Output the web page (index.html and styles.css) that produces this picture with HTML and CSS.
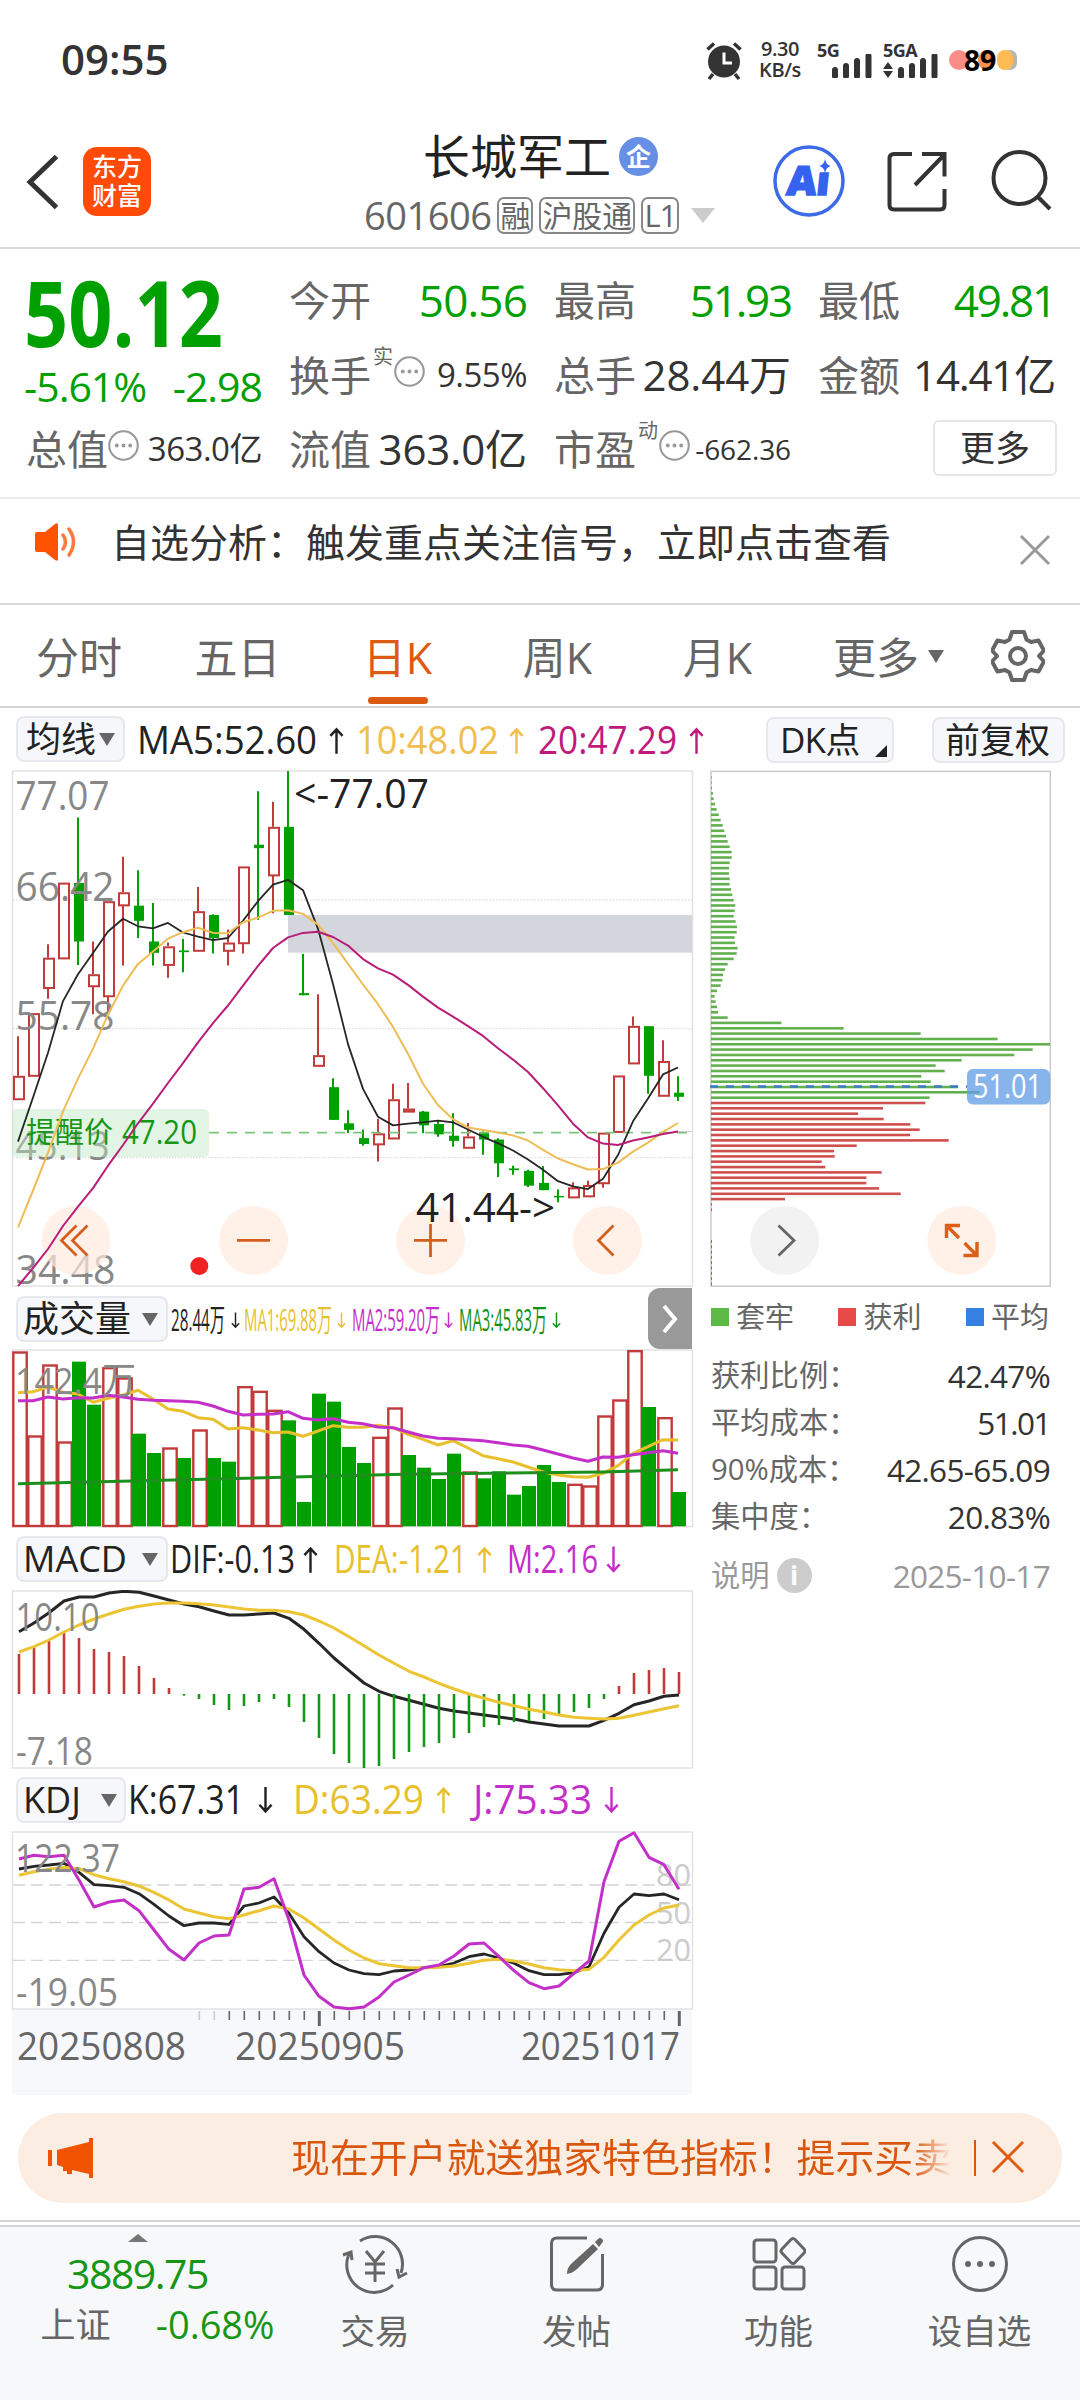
FILE: index.html
```
<!DOCTYPE html>
<html lang="zh-CN">
<head>
<meta charset="utf-8">
<title>长城军工 601606</title>
<link rel="stylesheet" href="styles.css">
</head>
<body>
<svg class="defs" width="0" height="0">
  <symbol id="up" viewBox="0 0 16 30"><path d="M8 29V3M1.500 10 8 3l6.500 7" fill="none" stroke="currentColor" stroke-width="2.600"/></symbol>
  <symbol id="down" viewBox="0 0 16 30"><path d="M8 1v26M1.500 20 8 27l6.500-7" fill="none" stroke="currentColor" stroke-width="2.600"/></symbol>
  <symbol id="dots" viewBox="0 0 30 30"><circle cx="15" cy="15" r="13.800" fill="none" stroke="#999" stroke-width="2"/><circle cx="8.500" cy="15" r="1.900" fill="#999"/><circle cx="15" cy="15" r="1.900" fill="#999"/><circle cx="21.500" cy="15" r="1.900" fill="#999"/></symbol>
</svg>

<div class="status">
  <span class="clock">09:55</span>
  <svg class="alarm" viewBox="0 0 38 40" width="38" height="40"><circle cx="19" cy="20.500" r="16" fill="#333"/><path d="M2.500 8.500 9 2.500M35.500 8.500 29 2.500M8 33l-4 5M30 33l4 5" stroke="#333" stroke-width="3.500"/><path d="M19 11.500v10.500h8" fill="none" stroke="#fff" stroke-width="3"/></svg>
  <div class="speed"><span>9.30</span><span>KB/s</span></div>
  <div class="signal"><span>5G</span><svg viewBox="0 0 55 24" width="55" height="24"><path d="M18 16v6M29 12v10M40 7v15M51.500 2v20" stroke="#333" stroke-width="6" stroke-linecap="round"/></svg></div>
  <div class="signal second"><span>5GA</span><svg viewBox="0 0 55 24" width="55" height="24"><path d="M0 15l5-7 5 7zM0 17l5 7 5-7z" fill="#333"/><path d="M18 16v6M29 12v10M40 7v15M51.500 2v20" stroke="#333" stroke-width="6" stroke-linecap="round"/></svg></div>
  <div class="battery"><i class="b1"></i><i class="b2"></i><i class="b3"></i><i class="b4"></i><b>89</b></div>
</div>

<header class="header">
  <svg class="back" viewBox="0 0 34 56" width="34" height="56"><path d="M30.500 2.500 4 28l26.500 25.500" fill="none" stroke="#333" stroke-width="5"/></svg>
  <div class="logo"><span>东方</span><span>财富</span></div>
  <div class="title">
    <div class="name">长城军工<span class="badge">企</span></div>
    <div class="code"><span class="num">601606</span><span class="tag">融</span><span class="tag">沪股通</span><span class="tag l1">L1</span><i class="tri"></i></div>
  </div>
  <svg class="ai" viewBox="0 0 72 74" width="72" height="74"><circle cx="36" cy="37" r="34" fill="none" stroke="#3d6be8" stroke-width="3.500"/><text x="18" y="51" class="ai-text" textLength="43" lengthAdjust="spacingAndGlyphs" transform="skewX(-6)">Aı</text><path d="M52 15q1 6 6 7-5 1-6 7-1-6-6-7 5-1 6-7z" fill="#3563f0"/></svg>
  <svg class="share" viewBox="0 0 60 62" width="60" height="62"><path d="M25 3H7q-4.500 0-4.500 4.500V54q0 4.500 4.500 4.500h46q4.500 0 4.500-4.500V38M35 3h22.500v22.500M57 4 28 34" fill="none" stroke="#333" stroke-width="4"/></svg>
  <svg class="search" viewBox="0 0 62 62" width="62" height="62"><circle cx="28.500" cy="29" r="26" fill="none" stroke="#333" stroke-width="4"/><path d="m47 48 12 12" stroke="#333" stroke-width="4"/></svg>
</header>

<section class="quote">
  <div class="price"><div class="last">50.12</div><div class="change"><span>-5.61%</span><span>-2.98</span></div></div>
  <div class="cell"><label>今开</label><b class="g">50.56</b></div>
  <div class="cell"><label>最高</label><b class="g one">51.93</b></div>
  <div class="cell"><label>最低</label><b class="g one">49.81</b></div>
  <div class="cell"><label>换手<sup>实</sup></label><svg class="more-dots" width="31" height="31"><use href="#dots"/></svg><b class="mid">9.55%</b></div>
  <div class="cell"><label>总手</label><b>28.44万</b></div>
  <div class="cell"><label>金额</label><b class="amount">14.41亿</b></div>
  <div class="cell"><label>总值</label><svg class="more-dots near" width="31" height="31"><use href="#dots"/></svg><b class="mid">363.0亿</b></div>
  <div class="cell"><label>流值</label><b>363.0亿</b></div>
  <div class="cell"><label>市盈<sup>动</sup></label><svg class="more-dots" width="31" height="31"><use href="#dots"/></svg><b class="small">-662.36</b></div>
  <div class="cell end"><button class="more">更多</button></div>
</section>

<section class="notice">
  <svg viewBox="0 0 46 38" width="46" height="38"><path d="M2 11q0-2 2-2h8L22 1q3-2 3 1v34q0 3-3 1l-10-8H4q-2 0-2-2z" fill="#ff5300"/><path d="M30 12q5 7 0 14M36 6q9 13 0 26" fill="none" stroke="#ff7a3a" stroke-width="3.500" stroke-linecap="round"/></svg>
  <p>自选分析：触发重点关注信号，立即点击查看</p>
  <svg class="close" viewBox="0 0 32 32" width="32" height="32"><path d="m2 2 28 28M30 2 2 30" stroke="#999" stroke-width="3"/></svg>
</section>

<nav class="tabs">
  <span>分时</span><span>五日</span><span class="on">日K</span><span>周K</span><span>月K</span><span class="drop">更多<i class="caret"></i></span>
  <svg viewBox="-27 -27 54 54" width="54" height="54"><path d="M-6-24H6L8.500-16.500 13-14 20.500-15.500 26-5.500 21 0 26 5.500 20.500 15.500 13 14 8.500 16.500 6 24H-6L-8.500 16.500-13 14-20.500 15.500-26 5.500-21 0-26-5.500-20.500-15.500-13-14-8.500-16.500z" fill="none" stroke="#666" stroke-width="4" stroke-linejoin="round"/><circle r="8" fill="none" stroke="#666" stroke-width="4"/></svg>
</nav>

<div class="ma-row">
  <button class="pill ma">均线<i class="caret"></i></button>
  <svg id="ma-values" class="values" width="590" height="54"></svg>
  <button class="pill dk">DK点<i class="corner"></i></button>
  <button class="pill fq">前复权</button>
</div>

<main class="board">
  <div class="left">
    <svg id="kline" width="694" height="520" viewBox="0 768 694 520"></svg>
    <div class="ind-row first">
      <button class="pill wide">成交量<i class="caret"></i></button>
      <svg id="vol-values" class="values" width="474" height="54"></svg>
      <div class="next"><svg viewBox="0 0 18 30" width="18" height="30"><path d="m3 2 11 13L3 28" fill="none" stroke="#fff" stroke-width="4"/></svg></div>
    </div>
    <svg id="volume" width="694" height="179" viewBox="0 1349 694 179"></svg>
    <div class="ind-row">
      <button class="pill wide">MACD<i class="caret"></i></button>
      <svg id="macd-values" class="values" width="474" height="54"></svg>
    </div>
    <svg id="macd" width="694" height="179" viewBox="0 1590 694 179"></svg>
    <div class="ind-row">
      <button class="pill kdj">KDJ<i class="caret"></i></button>
      <svg id="kdj-values" class="values" width="516" height="54"></svg>
    </div>
    <svg id="kdj" width="694" height="264" viewBox="0 1831 694 264"></svg>
  </div>
  <aside class="right">
    <svg id="chips" width="344" height="519" viewBox="709 769 344 519"></svg>
    <div class="legend"><span class="k1">套牢</span><span class="k2">获利</span><span class="k3">平均</span></div>
    <dl class="stats">
      <div><dt>获利比例：</dt><dd>42.47%</dd></div>
      <div><dt>平均成本：</dt><dd class="one">51.01</dd></div>
      <div><dt>90%成本：</dt><dd>42.65-65.09</dd></div>
      <div><dt>集中度：</dt><dd>20.83%</dd></div>
      <div class="note"><dt>说明<i>i</i></dt><dd>2025-10-17</dd></div>
    </dl>
  </aside>
</main>

<div class="promo">
  <svg viewBox="0 0 46 40" width="46" height="40"><path d="M0 12h4v16H0zM9 12 41 4V0h4v40h-4v-4l-17-4v4h-5v-3h-4v-4l-6-2z" fill="#f05400"/></svg>
  <p>现在开户就送独家特色指标！提示买卖</p>
  <i class="rule"></i>
  <svg class="x" viewBox="0 0 34 34" width="34" height="34"><path d="m2 2 30 30M32 2 2 32" stroke="#e05a10" stroke-width="3"/></svg>
</div>

<footer class="bar">
  <div class="index">
    <i class="fold"></i>
    <strong>3889.75</strong>
    <div><span>上证</span><em>-0.68%</em></div>
  </div>
  <div class="item"><svg viewBox="0 0 66 60" width="66" height="60" fill="none" stroke="#666" stroke-width="3"><path d="M18 7A27.500 27.500 0 0 1 59 39M51 51A27.500 27.500 0 0 1 7 20M1 21l8-3 1 8M65 39l-8 4-2-8"/><path d="M24 17l9 11 9-11M33 28v20M23 30h20M23 39h20"/></svg><span>交易</span></div>
  <div class="item"><svg viewBox="0 0 56 58" width="56" height="58"><path d="M38 3H8q-5.500 0-5.500 5.500v41Q2.500 55 8 55h40q5.500 0 5.500-5.500V19" fill="none" stroke="#666" stroke-width="3"/><path d="M18 39q0-6 4-10L44 9l5 5-21 20q-4 4-10 5zM46 7l3-3q2-2 4 0 2 2 0 4l-3 4z" fill="#666"/></svg><span>发帖</span></div>
  <div class="item"><svg viewBox="0 0 54 56" width="54" height="56" fill="none" stroke="#666" stroke-width="3"><rect x="2" y="4" width="22" height="22" rx="3"/><rect x="2" y="31" width="22" height="22" rx="3"/><rect x="30" y="31" width="22" height="22" rx="3"/><path d="M39 3.500q2-2 4 0l9 9.500q2 2 0 4l-9 9.500q-2 2-4 0L30 17q-2-2 0-4z"/></svg><span>功能</span></div>
  <div class="item"><svg viewBox="0 0 58 58" width="58" height="58"><circle cx="29" cy="29" r="26.500" fill="none" stroke="#666" stroke-width="3"/><g fill="#666"><circle cx="17" cy="29" r="3"/><circle cx="29" cy="29" r="3"/><circle cx="41" cy="29" r="3"/></g></svg><span>设自选</span></div>
</footer>
<script src="charts.js"></script>
</body>
</html>
```
FILE: styles.css
```
* { box-sizing: border-box; }
body { margin: 0; width: 1080px; height: 2400px; overflow: hidden; background: #fff; color: #333; font-family: "Open Sans", "Noto Sans CJK SC", sans-serif; }
svg { display: block; flex: none; }
.defs { position: absolute; }
p, dl, dd { margin: 0; }
button { font-family: inherit; padding: 0; }
i, em { font-style: normal; }

.status { display: flex; height: 120px; padding-left: 61px; }
.clock { width: 644px; padding-top: 32px; font-size: 42px; font-weight: 600; line-height: 54px; }
.alarm { margin-top: 41px; }
.speed { display: flex; flex-direction: column; width: 60px; margin-left: 7px; padding-top: 38px; font-size: 20px; font-weight: 600; line-height: 21px; text-align: center; white-space: nowrap; }
.speed span { letter-spacing: -.4px; }
.signal { display: flex; flex-direction: column; width: 65px; margin-left: 6px; padding-top: 38px; padding-left: 1px; }
.signal span { height: 16px; font-size: 18px; font-weight: 700; line-height: 24px; letter-spacing: -.5px; }
.signal.second { margin-left: 1px; width: 66px; }
.battery { position: relative; display: flex; width: 68px; height: 20px; margin: 50px 0 0 1px; }
.battery i { height: 20px; border-radius: 10px; }
.b1 { width: 20px; background: #fb8d88; }
.b2 { width: 18px; margin-left: 9px; background: #fb934f; }
.b3 { width: 16px; margin-left: 1px; background: #ffbc52; z-index: 1; }
.b4 { width: 14px; margin-left: -10px; background: #b5b5b5; }
.battery b { position: absolute; left: 15px; top: -8px; z-index: 2; color: #000; font-size: 28px; line-height: 36px; }

.header { display: flex; height: 129px; border-bottom: 2px solid #dadada; }
.back { margin: 34px 0 0 26px; }
.logo { display: flex; flex-direction: column; align-items: center; width: 68px; height: 69px; margin: 27px 0 0 23px; padding-top: 5px; border-radius: 14px; background: #ff4a08; color: #fff; font-size: 25px; font-weight: 500; line-height: 29px; }
.title { width: 350px; margin-left: 213px; }
.name { display: flex; align-items: center; height: 58px; padding: 14px 0 0 59px; font-size: 47px; color: #222; line-height: 58px; }
.badge { display: block; width: 39px; height: 39px; margin: 0 0 0 8px; border-radius: 50%; background: #688fe6; color: #fff; font-size: 25px; font-weight: 700; line-height: 38px; text-align: center; }
.code { display: flex; align-items: center; gap: 6px; height: 46px; margin-top: 14px; color: #666; white-space: nowrap; }
.num { width: 128px; font-size: 38px; letter-spacing: -.5px; }
.tag { flex: none; height: 37px; padding: 0 1px; border: 2px solid #888; border-radius: 7px; font-size: 30px; line-height: 33px; }
.l1 { width: 38px; font-size: 31px; letter-spacing: -1px; }
.tri { margin-left: 6px; border: 12px solid transparent; border-top: 15px solid #ccc; border-bottom: 0; }
.ai { margin: 24px 0 0 59px; }
.ai-text { font-size: 40px; font-weight: 800; fill: #3563f0; stroke: #3563f0; stroke-width: 1.500px; }
.share { margin: 31px 0 0 42px; }
.search { margin: 29px 0 0 44px; }

.quote { display: grid; grid-template: 75px 74px 74px / 236px 238px 237px 237px; column-gap: 27px; height: 250px; padding: 14px 0 0 26px; border-bottom: 2px solid #eee; color: #333; }
.price { grid-row: span 2; color: #00a000; white-space: nowrap; }
.last { height: 97px; margin-left: -2px; font-size: 91px; font-weight: 700; line-height: 99px; transform: scaleX(.85); transform-origin: left; }
.change { display: flex; justify-content: space-between; margin-left: -2px; font-size: 41px; line-height: 53px; letter-spacing: -1px; }
.cell { display: flex; align-items: center; height: 74px; }
.cell label { display: flex; font-size: 41px; line-height: 60px; color: #666; white-space: nowrap; }
.cell sup { width: 20px; margin: -3px 0 0 2px; font-size: 20px; line-height: 30px; vertical-align: baseline; }
.cell b { margin-left: auto; font-size: 42px; font-weight: 400; line-height: 60px; letter-spacing: -.1px; white-space: nowrap; }
.cell b.g { color: #00a000; font-size: 44px; letter-spacing: -.8px; }
.cell b.g.one { letter-spacing: -2.200px; }
.cell b.amount { letter-spacing: -1.200px; }
.more-dots { margin-left: 1px; margin-top: -8px; }
.near { margin-left: 0; }
.cell b.mid { font-size: 33px; letter-spacing: -.5px; }
.cell b.small { font-size: 28px; }
.end { justify-content: flex-end; }
.more { width: 124px; height: 56px; margin: -2px -2px 0 0; border: 2px solid #e6e6e6; border-radius: 6px; background: #fff; color: #333; font-size: 35px; line-height: 50px; }

.notice { display: flex; height: 106px; padding-left: 33px; border-bottom: 2px solid #dadada; }
.notice > svg { margin-top: 24px; }
.notice p { width: 940px; padding-left: 32px; font-size: 39px; line-height: 86px; white-space: nowrap; }
.notice svg.close { margin-top: 35px; }

.tabs { display: grid; grid-template-columns: 158px 159px 161px 159px 161px 190px 60px; height: 103px; border-bottom: 2px solid #d5d5d5; color: #666; font-size: 43px; line-height: 106px; text-align: center; }
.tabs .on { position: relative; color: #dc5a12; }
.on::after { content: ""; position: absolute; left: 50%; bottom: 7px; width: 60px; height: 7px; margin-left: -30px; border-radius: 4px; background: #dc5a12; }
.drop { display: flex; align-items: center; padding-left: 35px; }
.caret { border: 8px solid transparent; border-top: 13px solid #666; border-bottom: 0; }
.drop .caret { margin-left: 9px; margin-top: -4px; }
.tabs svg { margin: 24px 0 0 3px; }

.ma-row { display: flex; height: 60px; padding-left: 16px; }
.pill { display: flex; align-items: center; height: 46px; border: 2px solid #e6e8ee; border-radius: 8px; background: #f6f7fa; color: #222; line-height: 42px; white-space: nowrap; }
.pill.ma { width: 109px; margin-top: 8px; padding-left: 8px; font-size: 35px; }
.ma .caret { margin-left: 3px; }
.ma-row .values { width: 641px; }
.pill.dk { position: relative; width: 128px; margin-top: 9px; padding-left: 12px; font-size: 35px; letter-spacing: -.8px; }
.corner { position: absolute; right: 5px; bottom: 4px; border-left: 12px solid transparent; border-bottom: 12px solid #222; }
.pill.fq { width: 133px; margin: 9px 0 0 38px; padding-left: 11px; font-size: 35px; }

.board { display: flex; height: 1345px; }
.left { width: 694px; }
.ind-row { display: flex; height: 62px; padding-left: 16px; }
.ind-row.first { height: 61px; }
.ind-row .pill { margin-top: 8px; font-size: 36px; }
.wide { width: 152px; padding: 0 8px 0 5px; justify-content: space-between; }
.kdj { width: 110px; padding: 0 7px 0 5px; justify-content: space-between; }
.next { display: flex; align-items: center; justify-content: center; width: 44px; height: 61px; margin-left: 6px; border-radius: 12px 0 0 12px; background: #999; }
.right { width: 344px; padding-left: 15px; }
.right > svg { margin-top: 1px; }
.legend { display: flex; justify-content: space-between; width: 338px; margin: 6px 0 0 2px; font-size: 29px; line-height: 46px; color: #666; }
.legend span { display: flex; align-items: center; gap: 7px; }
.legend span::before { content: ""; width: 18px; height: 18px; background: #5dba47; }
.legend .k2::before { background: #e84a4a; }
.legend .k3::before { background: #3580e0; }
.stats { width: 339px; margin: 12px 0 0 2px; font-size: 29.300px; line-height: 47px; white-space: nowrap; }
.stats div { display: flex; justify-content: space-between; }
.stats dt { display: flex; color: #666; }
.stats dd { font-size: 31.500px; letter-spacing: -.7px; }
.stats dd.one { letter-spacing: -1.500px; }
.stats .note { margin-top: 12px; }
.note dt, .note dd { color: #999; }
.note i { width: 35px; height: 35px; margin: 6px 0 0 7px; border-radius: 50%; background: #ccc; color: #fff; font-size: 27px; font-weight: 700; line-height: 34px; text-align: center; }

.promo { display: flex; width: 1044px; height: 90px; margin: 0 0 17px 18px; padding-left: 30px; border-radius: 45px; background: #fcede3; }
.promo svg { margin-top: 25px; }
.promo p { width: 661px; margin-left: 197px; overflow: hidden; font-size: 38.900px; line-height: 88px; white-space: nowrap; color: transparent; background: linear-gradient(90deg, #d9560f 94%, #fcede3 100%); -webkit-background-clip: text; background-clip: text; }
.rule { width: 2px; height: 36px; margin: 27px 15px 0 22px; background: #d9560f; }
.promo svg.x { margin-top: 27px; }

.bar { display: grid; grid-template-columns: 275px 200px 203px 201px 201px; height: 180px; border-top: 2px solid #d5d5d5; box-shadow: inset 0 3px #fff, inset 0 5px #d5d5d5; background: #f7f8fa; color: #666; }
.index { display: flex; flex-direction: column; align-items: center; padding-top: 12px; }
.fold { border: 10px solid transparent; border-bottom: 8px solid #777; border-top: 0; }
.index strong { height: 64px; font-size: 41px; font-weight: 400; line-height: 62px; letter-spacing: -1.500px; color: #169616; }
.index div { display: flex; justify-content: space-between; width: 234px; margin-left: 40px; font-size: 35px; line-height: 37px; }
.index em { color: #169616; font-size: 38px; }
.item { display: flex; flex-direction: column; align-items: center; font-size: 34.500px; }
.item svg { height: 60px; margin-top: 12px; }
.item span { margin-top: 11px; line-height: 52px; }

svg text { white-space: pre; }
```
FILE: charts.js
```
const RED = '#c23a3a', GREEN = '#00a000', BLACK = '#262626', GOLD = '#e8c02e', PURPLE = '#c32fc8';
const el = id => document.getElementById(id);
const cx = i => 18 + 15 * i;
const PRICE_UNIT = 2.9037;

const text = (x, y, w, s, fill, size = 38) =>
  `<text x="${x}" y="${y}" font-size="${size}" fill="${fill}" textLength="${w}" lengthAdjust="spacingAndGlyphs">${s}</text>`;
const rect = (x, y, w, h, attrs) => `<rect x="${x}" y="${y}" width="${w}" height="${h}" ${attrs}/>`;
const path = (d, stroke, w = 2, extra = '') => `<path d="${d}" fill="none" stroke="${stroke}" stroke-width="${w}" ${extra}/>`;
const series = (values, base, stroke, w, dx = 0, unit = 3) =>
  path('M' + values.map((v, i) => `${cx(i) + dx} ${(base + v / unit).toFixed(1)}`).join('L'), stroke, w, 'stroke-linejoin="round"');
const frame = (y, h) => rect(12.5, y, 680, h, 'fill="none" stroke="#e2e2e2" stroke-width="1.500"');

/* Value strips: [x, width, text, colour, arrow x, arrow direction] */
function strip(id, left, items, baseline, size, aw = 15) {
  el(id).innerHTML = items.map(([x, w, s, c, ax, dir]) =>
    text(x - left, baseline, w, s, c, size) +
    `<svg x="${ax - left}" y="${baseline - size * .71}" width="${aw}" height="${size * .74}" preserveAspectRatio="none" style="color:${c}"><use href="#${dir}"/></svg>`).join('');
}
strip('ma-values', 125, [[137, 180, 'MA5:52.60', '#222', 329, 'up'], [356, 143, '10:48.02', '#f0bd50', 509, 'up'], [538, 139, '20:47.29', '#c01a7c', 689, 'up']], 45.5, 38);
strip('vol-values', 168, [[171, 54, '28.44万', '#222', 231, 'down'], [244, 88, 'MA1:69.88万', GOLD, 337, 'down'], [352, 88, 'MA2:59.20万', PURPLE, 444, 'down'], [459, 88, 'MA3:45.83万', '#169016', 552, 'down']], 43, 31, 9);
strip('macd-values', 168, [[170, 125, 'DIF:-0.13', '#222', 303, 'up'], [334, 133, 'DEA:-1.21', GOLD, 477, 'up'], [507, 91, 'M:2.16', PURPLE, 606, 'down']], 45, 39);
strip('kdj-values', 126, [[128, 116, 'K:67.31', '#222', 258, 'down'], [293, 131, 'D:63.29', GOLD, 436, 'up'], [473, 119, 'J:75.33', PURPLE, 604, 'down']], 44.7, 40);

/* Candles: colour, high, body top, body bottom, low (chart units below the 760px line) */
const candles = [
['r',802,917,985,985],['r',735,735,917,917],['r',535,574,662,693],['r',356,356,576,576],['g',167,357,527,595],['r',527,622,657,738],['r',410,410,686,735],['r',281,384,422,597],['g',320,423,467,517],['g',415,527,560,597],['r',530,541,595,632],['g',520,553,558,616],['r',369,439,554,554],['g',448,450,517,562],['r',492,530,554,597],
['r',309,309,532,562],['g',91,246,256,464],['r',121,194,335,445],['g',32,194,450,450],['g',563,677,683,683],['r',680,857,888,888],['g',924,950,1045,1045],['g',1017,1055,1074,1083],['g',1073,1098,1115,1120],['r',1042,1084,1116,1166],['r',940,985,1099,1099],['r',938,1012,1021,1021],['g',1019,1021,1061,1083],['g',1047,1057,1087,1094],['g',1026,1091,1106,1123],
['r',1054,1093,1126,1126],['g',1079,1081,1102,1146],['g',1098,1102,1171,1211],['g',1178,1186,1191,1204],['g',1190,1193,1236,1240],['g',1179,1228,1249,1249],['g',1247,1266,1270,1284],['r',1226,1241,1270,1270],['r',1222,1234,1267,1267],['r',1082,1082,1229,1242],['r',916,916,1080,1080],['r',745,772,881,881],['g',773,773,917,969],['r',814,874,975,975],['g',918,966,978,990]];
const ma5 = [1108,980,850,700,622,560,498,461,483,489,473,501,513,523,517,467,410,362,348,378,490,650,825,955,1036,1061,1056,1052,1047,1052,1073,1094,1113,1134,1160,1190,1223,1238,1246,1216,1147,1049,983,913,893];
const ma10 = [1357,1250,1140,1020,925,838,740,655,592,556,519,500,487,502,503,471,458,438,436,447,478,532,592,652,709,775,853,940,1002,1043,1067,1074,1082,1090,1105,1132,1157,1174,1189,1188,1169,1137,1111,1080,1054];
const ma20 = [1528,1475,1420,1353,1297,1243,1178,1118,1055,998,938,880,820,764,713,655,598,546,515,502,499,514,539,578,605,623,653,687,719,745,773,801,837,870,906,953,1003,1056,1096,1114,1118,1105,1096,1086,1079];

const round = (x, fill) => `<circle cx="${x}" cy="1240.400" r="34.400" fill="${fill}"/>`;
const PEACH = '#ffe9de" fill-opacity=".7';
let k = frame(771, 515) + rect(288, 915, 404, 37.6, 'fill="#d3d6dc"');
for (const y of [899.8, 1028.7, 1157.7]) k += path(`M13 ${y}H692`, '#ddd', 1.2, 'stroke-dasharray="1.500 1.500"');
candles.forEach(([c, hi, top, bot, lo], i) => {
  const x = cx(i), p = v => 760 + v / PRICE_UNIT;
  if (c === 'r') {
    k += path(`M${x} ${p(hi)}V${p(top)}M${x} ${p(bot)}V${p(lo)}`, RED);
    k += rect(x - 4, p(top) + 1, 10, Math.max(1, p(bot) - p(top) - 1), `fill="#fff" stroke="${RED}" stroke-width="2"`);
  } else {
    k += path(`M${x} ${p(hi)}V${p(lo)}`, GREEN);
    k += rect(x - 4, p(top), 10, p(bot) - p(top), `fill="${GREEN}"`);
  }
});
k += [[810.3, '77.07', 94], [901, '66.42', 99], [1030.4, '55.78', 99], [1159.5, '45.13', 94], [1283.7, '34.48', 100]].map(([y, s, w]) => text(15.5, y, w, s, '#888', 40)).join('');
k += rect(12, 1109, 197, 48, 'rx="5" fill="#bfe6c2" fill-opacity=".45"') + path('M209 1132.600H692', '#7cc47c', 1.8, 'stroke-dasharray="10 8"') + path('M678 1131.500H692', '#ccc', 1);
k += text(26, 1143, 87, '提醒价', '#169616', 29) + text(122, 1144, 75, '47.20', '#169616', 32);
k += round(76, PEACH) + round(253.5, PEACH) + round(430.5, PEACH) + round(607.5, PEACH);
k += series(ma5, 760, BLACK, 1.8, 0, PRICE_UNIT) + series(ma10, 760, '#efbd55', 2, 0, PRICE_UNIT) + series(ma20, 760, '#b81e78', 2, 0, PRICE_UNIT);
k += path('M76.500 1225.500 61.500 1240.400l15 15M87.500 1225.500 72.500 1240.400l15 15M237 1240.400h33M414 1240.400h33M430.500 1224v33M613.500 1225.500 598.500 1240.400l15 15', '#d2601c', 2.8);
k += text(294, 808.3, 135, '&lt;-77.07', '#222', 40) + text(416, 1222, 139, '41.44-&gt;', '#222', 40);
k += '<circle cx="199.300" cy="1266" r="9" fill="#f02222"/>';
el('kline').innerHTML = k;

/* Volume */
const vol = '216r 468r 255r 486r 245g 374g 263r 294r 461g 519g 504r 534g 450r 534g 545g 320r 334r 391r 421g 666g 341g 365g 501g 549g 472r 384r 525g 563g 597g 521g 576r 595g 574g 644g 618g 555g 606g 613r 618r 408r 360r 212r 381g 413r 636g'.split(' ');
const vma1 = [338,335,321,337,342,367,355,345,331,357,387,394,413,418,447,443,450,458,456,469,453,437,442,442,436,443,463,478,495,482,504,527,536,546,561,576,585,590,592,580,557,520,500,479,480];
const vma2 = [362,362,351,357,353,354,346,351,358,361,362,364,367,378,394,405,403,402,395,415,420,416,427,431,441,443,456,468,475,476,479,482,488,495,499,510,522,534,544,531,532,524,518,512,520];
let v = frame(1350, 176.5);
vol.forEach((s, i) => {
  const y = 1280 + parseInt(s) / 3, x = 12 + 15 * i;
  v += s.endsWith('g') ? rect(x, y, 14, 1526.3 - y, `fill="${GREEN}"`) : rect(x + 1.3, y + .5, 13.4, 1525.5 - y, `fill="#fff" stroke="${RED}" stroke-width="2.400"`);
});
v += series(vma1, 1280, GOLD, 3) + series(vma2, 1280, PURPLE, 3);
v += path('M18 1483.700 403 1474.300 603 1472 678 1469.700', '#1d8f1d', 3) + text(15, 1394, 121, '142.4万', '#888', 37);
el('volume').innerHTML = v;

/* MACD */
const dif = [305,279,248,213,201,201,189,184,187,198,210,222,230,243,255,255,252,249,265,298,340,384,422,459,484,499,511,523,535,543,549,555,561,567,576,582,588,588,588,571,550,524,513,499,495];
const dea = [366,350,330,306,285,267,252,238,229,222,219,219,221,225,231,237,241,241,245,255,273,294,320,347,375,400,424,441,460,477,492,505,517,527,538,546,555,562,565,567,565,556,546,536,527];
const bars = [372,353,333,309,324,357,366,378,408,444,474,497,507,525,540,528,516,507,531,576,624,672,699,714,708,687,666,651,639,624,609,591,585,576,573,567,558,546,534,507,468,429,420,414,426];
let m = frame(1591, 177) + series(dif, 1530, BLACK, 3, 1);
m += bars.map((b, i) => path(`M${cx(i) + 1} 1694V${1530 + b / 3}`, b < 492 ? RED : '#169616', 2.6)).join('');
m += series(dea, 1530, '#ecc434', 3, 1) + text(15.5, 1631, 84, '10.10', '#888', 38) + text(16, 1765, 77, '-7.18', '#888', 38);
el('macd').innerHTML = m;

/* KDJ and the date axis */
const kk = [267,259,255,250,277,314,317,322,341,373,408,437,429,429,433,378,369,351,400,470,515,549,570,581,584,573,570,563,560,549,530,522,534,550,572,584,584,578,560,460,382,342,347,342,359];
const kd = [286,275,268,262,266,284,296,305,318,337,360,387,399,410,416,405,392,378,387,414,447,480,510,534,551,557,563,563,562,558,550,541,538,543,552,563,569,572,568,532,480,435,405,384,375];
const kj = [237,226,230,226,300,381,366,360,392,450,508,540,489,468,465,327,322,296,420,585,649,681,686,681,651,606,585,563,555,528,492,489,530,572,608,626,618,580,543,305,184,158,232,254,328];
let d = rect(12, 2010, 680, 85, 'fill="#f7f8fb"') + frame(1832, 177);
for (const y of [1885, 1922.5, 1960.3]) d += path(`M13 ${y}H692`, '#d4d4d4', 1.3, 'stroke-dasharray="12 6"');
d += text(656, 1886, 35, '80', '#ccc', 31) + text(656, 1924, 35, '50', '#ccc', 31) + text(656, 1961, 35, '20', '#ccc', 31);
d += series(kk, 1780, BLACK, 2.8, 1) + series(kd, 1780, '#ecc434', 3, 1) + series(kj, 1780, PURPLE, 3, 1);
d += text(15, 1872, 105, '122.37', '#888') + text(16, 2006, 102, '-19.05', '#888');
for (let i = 12; i < 45; i++) {
  const major = i === 20 || i === 44;
  d += path(`M${cx(i) + 1.3} 2011V${major ? 2026 : 2020}`, i < 14 ? '#ccc' : '#666', major ? 3 : 1.6);
}
d += text(17, 2060, 169, '20250808', '#666') + text(235, 2060, 170, '20250905', '#666') + text(521, 2060, 159, '20251017', '#666');
el('kdj').innerHTML = d;

/* Cost distribution, 15.5 chart units per row */
const ends = [65,65,66,69,71,75,80,86,92,98,103,108,113,119,125,125,119,117,117,119,119,123,127,131,136,134,131,137,141,140,134,135,143,140,131,113,105,99,97,92,81,74,77,81,84,113,274,461,692,923,1080,1028,973,815,737,764,694,722,804,869,719,706,579,504,581,661,689,660,776,500,432,434,395,406,575,529,529,567,632,285,66,66];
let c = rect(711, 771.4, 339.3, 514.800, 'fill="none" stroke="#c8c8c8" stroke-width="1.400"');
ends.forEach((e, i) => { c += rect(711, (760 + (50.5 + 15.5 * i) / PRICE_UNIT - 1.3).toFixed(1), (e - 63) / 3, 2.6, `fill="${i < 61 ? '#62b04e' : '#d05050'}"`); });
c += path('M711.500 1240V1286', '#d05050', 1, 'stroke-dasharray="3 2.300"');
c += path('M710 1086.500H967', '#3b7cc9', 2.6, 'stroke-dasharray="8 8"');
c += rect(967, 1069, 83, 35.5, 'rx="6" fill="#5f9be4" fill-opacity=".75"') + text(973, 1098, 69, '51.01', '#fff', 32);
c += round(784.7, '#f2f2f2') + round(961.7, '#fff0e8');
c += path('M778.500 1225.500 794 1240.400l-15.500 15', '#666', 2.8);
c += path('M946.500 1238V1225.500H960M947 1226l12 12M977 1242v13.500H963.500M976.500 1255l-12-12', '#dc5f18', 3.4);
el('chips').innerHTML = c;
```
